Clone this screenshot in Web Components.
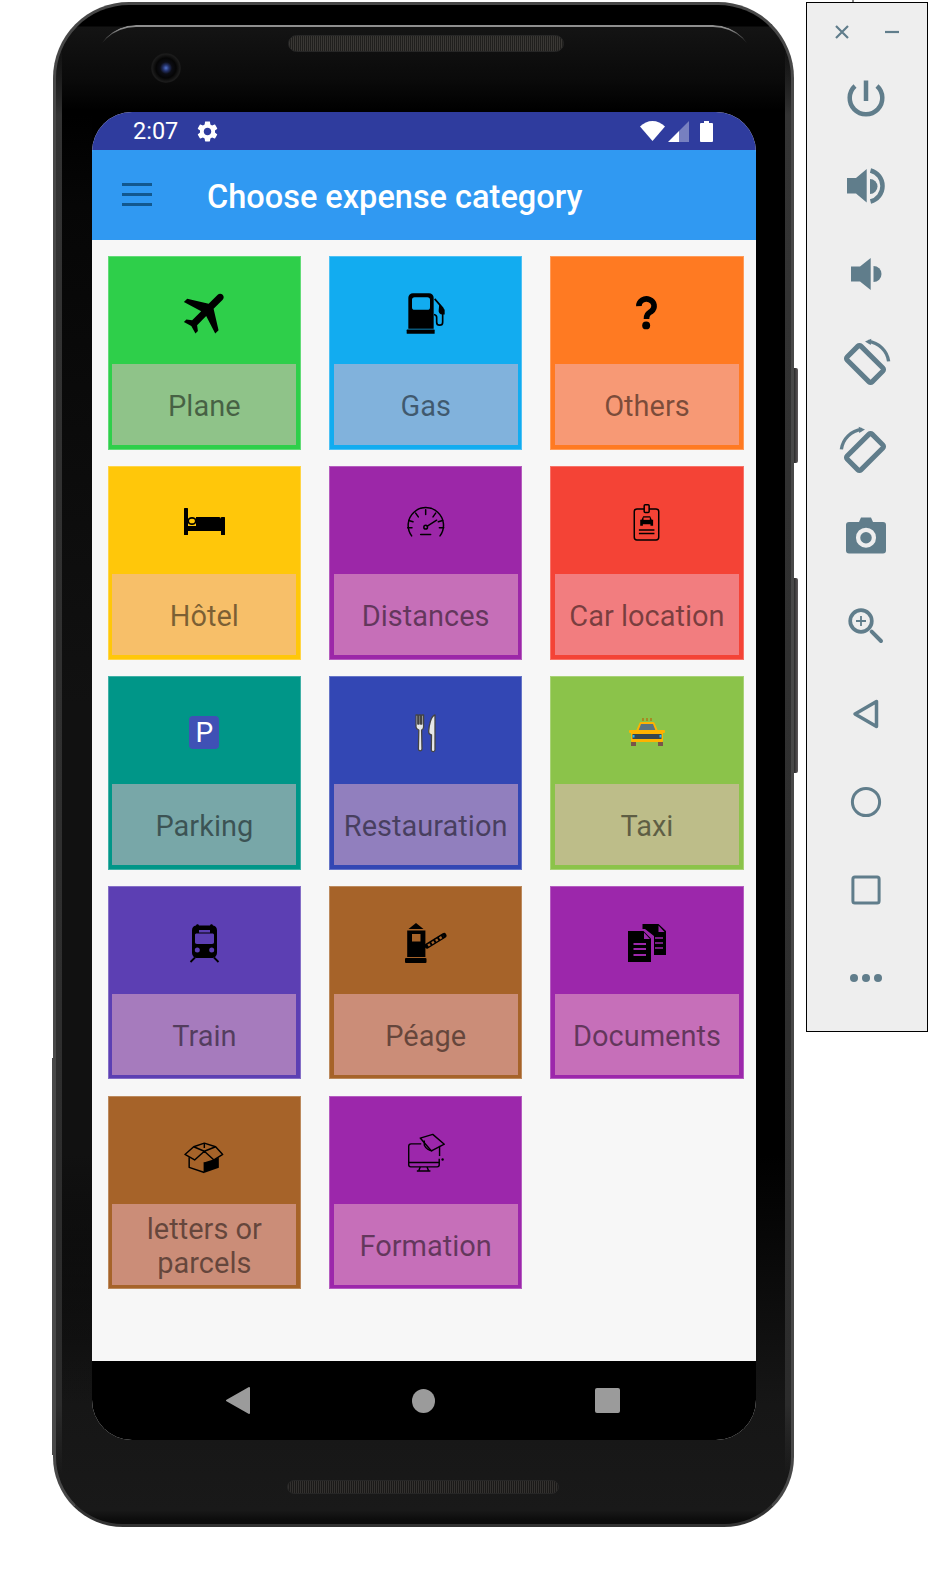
<!DOCTYPE html>
<html>
<head>
<meta charset="utf-8">
<title>Choose expense category</title>
<style>
  html, body { margin: 0; padding: 0; background: #fff; }
  body { width: 928px; height: 1590px; overflow: hidden; font-family: Roboto, "Liberation Sans", sans-serif; }
  .page { display: flex; align-items: flex-start; padding: 2px 0 0 53px; gap: 12px; }
  svg { display: block; overflow: visible; }
</style>
</head>
<body>
<div class="page">
  <phone-frame>
    <status-bar time="2:07"></status-bar>
    <app-bar title="Choose expense category"></app-bar>
    <expense-grid>
      <expense-card color="#2ecf4a">
        <svg slot="icon" width="42" height="42" viewBox="3 3 18 18" style="margin:0 0 3px 5px"><path transform="rotate(45 12 12)" d="M21 16v-2l-8-5V3.500c0-.83-.67-1.500-1.500-1.500S10 2.670 10 3.500V9l-8 5v2l8-2.500V19l-2 1.500V22l3.500-1 3.500 1v-1.500L13 19v-5.500l8 2.500z"/></svg>
        Plane
      </expense-card>
      <expense-card color="#12acf0">
        <svg slot="icon" width="40" height="43" viewBox="20 95 120 128" style="margin:1px 0 0 1px">
          <path fill-rule="evenodd" d="M27 205V112a14 14 0 0 1 14-14h48a14 14 0 0 1 14 14v93zM38 118v22a8 8 0 0 0 8 8h38a8 8 0 0 0 8-8v-22a8 8 0 0 0-8-8H46a8 8 0 0 0-8 8z"/>
          <rect x="22" y="207" width="84" height="13" rx="2"/>
          <path fill="none" stroke="#000" stroke-width="5" d="M106 115l24 28v42a9 9 0 0 1-18 0v-14a9 9 0 0 0-8-9"/>
          <path d="M120 130l16 18v14h-7a11 11 0 0 1-11-13z"/>
        </svg>
        Gas
      </expense-card>
      <expense-card color="#ff7a22">
        <svg slot="icon" width="27" height="38" viewBox="700 100 80 115" style="margin-right:1px">
          <path fill="none" stroke="#000" stroke-width="17" d="M717 137a23 21 0 1 1 38 15c-9 7-15 9-15 24"/>
          <circle cx="739" cy="195" r="12"/>
        </svg>
        Others
      </expense-card>

      <expense-card color="#ffc70a">
        <svg slot="icon" width="41" height="27" viewBox="0 0 41 27" style="margin-bottom:2px">
          <rect x="0" y="0" width="4" height="27" rx=".5"/>
          <rect x="37" y="9" width="4" height="18" rx=".5"/>
          <rect x="0" y="18" width="41" height="5"/>
          <path d="M12 9h23a2 2 0 0 1 2 2v8H12z"/>
          <ellipse cx="8" cy="13" rx="3.800" ry="3.200" fill="none" stroke="#000" stroke-width="1.800"/>
        </svg>
        Hôtel
      </expense-card>
      <expense-card color="#9c27a8">
        <svg slot="icon" width="40" height="32" viewBox="18 740 120 95">
          <g fill="none" stroke="#000" stroke-width="4.500" stroke-linecap="round">
            <path d="M35 826a53 53 0 1 1 85 0"/>
            <path d="M77 748v14M47 758l8 11M107 758l-8 11M26 780l13 4M128 780l-13 4M23 802h13M131 802h-13"/>
            <circle cx="77" cy="800" r="5.500"/>
            <path d="M82 797l28-18M62 822h30"/>
          </g>
        </svg>
        Distances
      </expense-card>
      <expense-card color="#f44336">
        <svg slot="icon" width="29" height="39" viewBox="700 730 86 118">
          <g fill="none" stroke="#000" stroke-width="4.500">
            <path d="M736 748h-22a8 8 0 0 0-8 8v78a8 8 0 0 0 8 8h58a8 8 0 0 0 8-8v-78a8 8 0 0 0-8-8h-21"/>
            <rect x="736" y="735" width="15" height="24" rx="3"/>
            <path d="M720 812h47M720 822h47"/>
          </g>
          <path d="M733 770h21l5 11h4v18h-8v-5h-23v5h-8v-18h4z"/>
          <rect x="734" y="774" width="19" height="7" fill="#f44336"/>
        </svg>
        Car location
      </expense-card>

      <expense-card color="#009688">
        <parking-sign slot="icon">P</parking-sign>
        Parking
      </expense-card>
      <expense-card color="#3347b4">
        <svg slot="icon" width="22" height="38" viewBox="0 0 22 38" style="margin-left:1px">
          <g fill="#e6e8e8" stroke="#444" stroke-width="1.300" stroke-linejoin="round">
            <path d="M1 1h1.800v9H4V1h1.600v9h1.200V1H8.600v12c0 1.500-.8 2.500-2 3l.4 19a1.800 1.800 0 0 1-3.600 0l.4-19c-1.200-.5-2.800-1.500-2.800-3z"/>
            <path d="M20 1v35a1.900 1.900 0 0 1-3.700.3L16.500 21c-2-.5-3-2-2.800-4 .3-5 2-15 6.300-16z"/>
          </g>
        </svg>
        Restauration
      </expense-card>
      <expense-card color="#8bc34a">
        <svg slot="icon" width="36" height="29" viewBox="0 0 36 29">
          <path d="M13 0h2v3h-2zM17 0h2v3h-2zM21 0h2v3h-2z" fill="#a88a22"/>
          <path d="M7 13l3.500-8c.3-.7.8-1 1.500-1h12c.7 0 1.200.3 1.500 1L29 13z" fill="#ffb300"/>
          <path d="M9.500 12.500l2.500-6.500h12l2.500 6.500z" fill="#5a7480"/>
          <rect x="0" y="12" width="36" height="3" rx="1" fill="#ffb300"/>
          <rect x="2" y="13" width="32" height="11" rx="1" fill="#ffb300"/>
          <rect x="3.500" y="16" width="29" height="5" fill="#37474f"/>
          <rect x="3.500" y="17" width="2" height="2.500" fill="#29b6f6"/>
          <rect x="30.500" y="17" width="2" height="2.500" fill="#29b6f6"/>
          <rect x="2" y="24" width="5" height="4" fill="#795548"/>
          <rect x="29" y="24" width="5" height="4" fill="#795548"/>
        </svg>
        Taxi
      </expense-card>

      <expense-card color="#5c3fb3">
        <svg slot="icon" width="29" height="40" viewBox="0 0 29 40">
          <path fill-rule="evenodd" d="M6 2.500C6.500.8 8.500.8 9 2.500h11c.5-1.700 2.500-1.700 3 0 2.500.5 4 2 4 5v22c0 3-2 5.500-5 5.500H7c-3 0-5-2.500-5-5.500v-22c0-3 1.500-4.500 4-5zM9 7v2.500h11V7zM5 12v7c0 1 .5 2 2 2h15c1.500 0 2-1 2-2v-7c0-1-.5-1.500-2-1.500H7c-1.500 0-2 .5-2 1.500zM7.300 24.500a2.500 2.500 0 1 0 0 5 2.500 2.500 0 0 0 0-5zM21.700 24.500a2.500 2.500 0 1 0 0 5 2.500 2.500 0 0 0 0-5z"/>
          <path d="M5 34.500L.5 39M24 34.500l4.500 4.500" stroke="#000" stroke-width="1.800" fill="none"/>
        </svg>
        Train
      </expense-card>
      <expense-card color="#a66329">
        <svg slot="icon" width="41" height="40" viewBox="0 0 41 40">
          <path d="M11 0l7.500 6H3.500z"/>
          <path fill-rule="evenodd" d="M2.200 7.500h18.200V34H2.200zM7 11v7.500h8.500V11z"/>
          <rect x="0" y="35" width="21.500" height="5" rx="1"/>
          <path d="M22 23L39 12.500" stroke="#000" stroke-width="5" stroke-linecap="round"/>
          <path d="M23 22.500L38.500 13" stroke="#a66329" stroke-width="2.400" stroke-dasharray="2.500 2"/>
        </svg>
        Péage
      </expense-card>
      <expense-card color="#9c27ab">
        <svg slot="icon" width="38" height="38" viewBox="0 0 38 38">
          <path d="M14.500 0h16L38 7v24H26V12L17 5h-2.500z"/>
          <path d="M30.500 1.500V8h6z" fill="#9c27ab"/>
          <path d="M27 14h8M27 19h8M27 24h8" stroke="#9c27ab" stroke-width="1.600"/>
          <path d="M0 7h15.500L23 14.500V38H0z"/>
          <path d="M16 8.500V15h6z" fill="#9c27ab"/>
          <path d="M5.500 20H18M5.500 25H18M5.500 31H18" stroke="#9c27ab" stroke-width="1.800"/>
        </svg>
        Documents
      </expense-card>

      <expense-card color="#a66329">
        <svg slot="icon" width="40" height="32" viewBox="252 150 124 98" style="margin-top:10px">
          <path d="M316 212l44-14v31l-44 16z"/>
          <g fill="none" stroke="#000" stroke-width="4.500" stroke-linejoin="round">
            <path d="M268 197v31l47 16"/>
            <path d="M315 212v32"/>
            <path d="M315 178l-33-14 33-11 35 11zM282 164l-27 24 30 17 30-27 30 27 27-17-22-24"/>
            <path d="M315 155v13"/>
          </g>
        </svg>
        letters or parcels
      </expense-card>
      <expense-card color="#9c27ab">
        <svg slot="icon" width="40" height="40" viewBox="920 128 118 118">
          <g fill="none" stroke="#000" stroke-width="4.200" stroke-linejoin="round">
            <path d="M965 160h-30a7 7 0 0 0-7 7v55a6 6 0 0 0 6 6h78a6 6 0 0 0 6-6v-18"/>
            <path d="M928 215h90M962 228l-4 10M982 228l4 10M952 240h40"/>
            <path d="M962 143l37-11 34 29-38 20z"/>
            <path d="M974 150v14c6 12 16 16 24 16"/>
            <path d="M1019 166v30"/>
          </g>
          <circle cx="1028" cy="206" r="3.500"/>
        </svg>
        Formation
      </expense-card>
    </expense-grid>
    <nav-bar></nav-bar>
  </phone-frame>
  <emulator-toolbar></emulator-toolbar>
</div>

<script>
class PhoneFrame extends HTMLElement {
  constructor() {
    super();
    this.attachShadow({ mode: "open" });
    this.shadowRoot.innerHTML = `
      <style>
        :host { display: block; position: relative; flex: none; width: 741px; height: 1525px; }
        .shell {
          box-sizing: border-box;
          width: 100%;
          height: 100%;
          border: 3px solid #484848;
          border-bottom-color: #333;
          border-radius: 76px 76px 70px 70px;
          overflow: hidden;
          display: flex;
          flex-direction: column;
          background:
            linear-gradient(to bottom, transparent 40px, #333 110px, #2c2c2c 1400px, transparent 1470px) left 0 top 0 / 6px 100% no-repeat,
            linear-gradient(to bottom, transparent 40px, #333 110px, #2c2c2c 1400px, transparent 1470px) right 0 top 0 / 6px 100% no-repeat,
            linear-gradient(to bottom, transparent 110px, #060606 200px, #111 700px, #111 1150px, transparent 1400px) left 6px top 0 / 30px 100% no-repeat,
            linear-gradient(to bottom, #000 0, #000 21px, #141414 22px, #0a0a0a 75px, #000 105px, #000 1150px, #161616 1400px, #191919 1505px, #0c0c0c 1515px);
          position: relative;
        }
        .top { flex: none; height: 107px; display: flex; padding: 30px 0 0 232px; box-sizing: border-box; }
        .bottom { flex: 1; display: flex; padding: 40px 0 0 231px; box-sizing: border-box; }
        .speaker {
          width: 274px;
          height: 15px;
          border: 1px solid #262626;
          border-radius: 9px;
          background: repeating-linear-gradient(90deg, #3a3835 0 1px, #201f1d 1px 2px);
        }
        .bottom .speaker { width: 270px; height: 12px; background: repeating-linear-gradient(90deg, #33312f 0 1px, #1a1918 1px 2px); }
        .screen {
          flex: none;
          width: 664px;
          height: 1328px;
          margin-left: 36px;
          border-radius: 40px;
          overflow: hidden;
          background: #f7f7f7;
          display: flex;
          flex-direction: column;
        }
        .highlight {
          position: absolute;
          left: 38px;
          right: 36px;
          top: 20px;
          height: 40px;
          border-top: 2px solid #8e8e8e;
          border-radius: 55px 55px 0 0;
          -webkit-mask: linear-gradient(to bottom, #000 4px, transparent 18px);
        }
        .camera {
          position: absolute;
          left: 95px;
          top: 48px;
          width: 30px;
          height: 30px;
          border-radius: 50%;
          background: radial-gradient(circle at 50% 50%, #5272cc 0, #24326a 3px, #0c0d14 6px, #050505 10px, #1c1c1c 14px, #141414 15px);
        }
        .btn { position: absolute; right: -4px; width: 4px; background: linear-gradient(to right, #2a2a2a, #5f5a5c); border-radius: 0 2px 2px 0; }
        .lip { position: absolute; left: -1px; top: 1056px; bottom: 72px; width: 2px; background: #4a4a4a; }
      </style>
      <div class="shell">
        <div class="top"><div class="speaker"></div></div>
        <div class="screen"><slot></slot></div>
        <div class="bottom"><div class="speaker"></div></div>
        <div class="highlight"></div>
        <div class="camera"></div>
      </div>
      <div class="btn" style="top:366px;height:95px"></div>
      <div class="btn" style="top:576px;height:195px"></div>
      <div class="lip"></div>
    `;
  }
}

class StatusBar extends HTMLElement {
  constructor() {
    super();
    this.attachShadow({ mode: "open" });
    this.shadowRoot.innerHTML = `
      <style>
        :host { display: flex; flex: none; align-items: center; height: 38px; padding: 0 43px 0 41px; background: #2f3c9e; color: #fff; font: 400 23.5px/38px Roboto, sans-serif; }
        svg { display: block; flex: none; }
        .time { margin-right: 17px; }
        .right { margin-left: auto; display: flex; align-items: center; }
      </style>
      <span class="time"></span>
      <svg width="25" height="25" viewBox="0 0 24 24" fill="#fff"><path d="M19.140 12.940c.04-.3.06-.61.06-.94 0-.32-.02-.64-.07-.94l2.030-1.580c.18-.14.230-.41.120-.61l-1.920-3.320c-.12-.22-.37-.29-.59-.22l-2.390.96c-.5-.38-1.030-.7-1.620-.94l-.36-2.540c-.04-.24-.24-.41-.48-.41h-3.840c-.24 0-.43.17-.47.41l-.36 2.540c-.59.24-1.130.57-1.620.94l-2.390-.96c-.22-.08-.47 0-.59.22L2.740 8.870c-.12.210-.08.470.120.610l2.030 1.580c-.05.3-.09.630-.09.940s.02.640.07.940l-2.030 1.580c-.18.140-.23.410-.12.610l1.920 3.320c.12.220.37.290.59.220l2.390-.96c.5.380 1.030.700 1.620.940l.36 2.540c.05.240.24.410.48.410h3.840c.24 0 .44-.17.47-.41l.36-2.540c.59-.24 1.130-.56 1.620-.94l2.390.96c.22.080.47 0 .59-.22l1.920-3.320c.12-.22.070-.47-.12-.61l-2.010-1.580zM12 15.600c-1.980 0-3.600-1.620-3.600-3.600s1.620-3.600 3.600-3.600 3.600 1.620 3.600 3.600-1.620 3.600-3.600 3.600z"/></svg>
      <div class="right">
        <svg width="25" height="20" viewBox="0 0 25 20" fill="#fff"><path d="M12.500 20L0 5.500C3.500 2 8 0 12.500 0S21.500 2 25 5.500z"/></svg>
        <svg width="21" height="21" viewBox="0 0 21 21" style="margin-left:3px"><path d="M0 21L11 10v11z" fill="#fff"/><path d="M11 10L21 0v21H11z" fill="#fff" fill-opacity=".35"/></svg>
        <svg width="13" height="21" viewBox="0 0 13 21" fill="#fff" style="margin-left:11px"><path d="M4 0h5v2h3a1 1 0 0 1 1 1v17a1 1 0 0 1-1 1H1a1 1 0 0 1-1-1V3a1 1 0 0 1 1-1h3z"/></svg>
      </div>
    `;
    this.shadowRoot.querySelector(".time").textContent = this.getAttribute("time");
  }
}

class AppBar extends HTMLElement {
  constructor() {
    super();
    this.attachShadow({ mode: "open" });
    this.shadowRoot.innerHTML = `
      <style>
        :host { display: flex; flex: none; align-items: center; gap: 55px; height: 90px; padding-left: 30px; background: #3099f2; }
        .menu { display: flex; flex-direction: column; gap: 7px; width: 30px; margin-top: -2px; }
        .menu i { display: block; height: 3px; background: #12588f; }
        h1 { margin: 4px 0 0; color: #fff; font: 500 32.5px/40px Roboto, sans-serif; }
      </style>
      <div class="menu"><i></i><i></i><i></i></div>
      <h1></h1>
    `;
    this.shadowRoot.querySelector("h1").textContent = this.getAttribute("title");
  }
}

class ExpenseGrid extends HTMLElement {
  constructor() {
    super();
    this.attachShadow({ mode: "open" });
    this.shadowRoot.innerHTML = `
      <style>
        :host {
          display: grid;
          flex: 1;
          grid-template-columns: repeat(3, 193.5px);
          grid-auto-rows: 193.8px;
          column-gap: 27.8px;
          row-gap: 16.1px;
          padding: 16px 0 0 15.6px;
          background: #f7f7f7;
        }
      </style>
      <slot></slot>
    `;
  }
}

class ExpenseCard extends HTMLElement {
  constructor() {
    super();
    this.attachShadow({ mode: "open" });
    this.shadowRoot.innerHTML = `
      <style>
        :host { display: flex; flex-direction: column; box-sizing: border-box; padding: 0 4.7px 4.7px; outline: 1px solid rgba(255,255,255,.25); outline-offset: -1px; }
        .icon { flex: 1; display: flex; align-items: center; justify-content: center; padding-top: 6px; }
        .label {
          flex: none;
          height: 81px;
          box-sizing: border-box;
          display: flex;
          align-items: center;
          justify-content: center;
          text-align: center;
          padding: 5px 2px 0;
          background: rgba(240,184,200,.5);
          color: rgba(0,0,0,.5);
          font: 400 29px/33.5px Roboto, sans-serif;
        }
      </style>
      <div class="icon"><slot name="icon"></slot></div>
      <div class="label"><div><slot></slot></div></div>
    `;
    this.style.background = this.getAttribute("color");
  }
}

class ParkingSign extends HTMLElement {
  constructor() {
    super();
    this.attachShadow({ mode: "open" });
    this.shadowRoot.innerHTML = `
      <style>
        :host { display: flex; align-items: center; justify-content: center; width: 30px; height: 33px; border-radius: 4px; background: #3f51b5; color: #fff; font: 400 28px/33px Roboto, sans-serif; }
      </style>
      <slot></slot>
    `;
  }
}

class NavBar extends HTMLElement {
  constructor() {
    super();
    this.attachShadow({ mode: "open" });
    this.shadowRoot.innerHTML = `
      <style>
        :host { display: flex; flex: none; align-items: center; height: 79px; background: #000; padding: 0 0 0 134px; }
        svg { display: block; flex: none; }
      </style>
      <svg width="24" height="27" viewBox="0 0 24 27" fill="#9b9b9b" stroke="#9b9b9b" stroke-width="2" stroke-linejoin="round"><path d="M1 13.500L23 1v25z"/></svg>
      <svg width="23" height="24" viewBox="0 0 23 24" fill="#9b9b9b" style="margin-left:162px"><ellipse cx="11.500" cy="12" rx="11.500" ry="12"/></svg>
      <svg width="25" height="25" viewBox="0 0 25 25" fill="#9b9b9b" style="margin-left:160px"><rect width="25" height="25" rx="2"/></svg>
    `;
  }
}

class EmulatorToolbar extends HTMLElement {
  constructor() {
    super();
    this.attachShadow({ mode: "open" });
    const back = '<path d="M13 24L34.500 11.500v25z" fill="none" stroke="#607d8b" stroke-width="3.500" stroke-linejoin="round"/>';
    const rotate = `<rect x="7.200" y="14.700" width="33.600" height="18.600" rx="2" transform="rotate(45 24 24)" fill="none" stroke="#607d8b" stroke-width="4.800"/>
      <path d="M27 2.500A22 22 0 0 1 46.500 21.500" fill="none" stroke="#607d8b" stroke-width="3.200"/><path d="M24 2.500l6-2.500-.5 6z" fill="#607d8b"/>`;
    const icons = [
      '<path transform="translate(0 1)" d="M13 11a16.300 16.300 0 1 0 22 0M24 5.500V26" fill="none" stroke="#607d8b" stroke-width="4.500"/>',
      '<path d="M5 16h9L24.700 7v33.500L14 31.500H5z" fill="#607d8b"/><path d="M28 17a7.500 7.500 0 0 1 0 15z" fill="#607d8b"/><path d="M28.500 8.500a16 16 0 0 1 0 31" fill="none" stroke="#607d8b" stroke-width="4.500"/>',
      '<path d="M9 16.500h9L28.700 8v32L18 31.500H9z" fill="#607d8b"/><path d="M31.500 16a8 8 0 0 1 0 16z" fill="#607d8b"/>',
      `<g transform="translate(-1 2) translate(24 24) scale(1.050) translate(-24 -24)">${rotate}</g>`,
      `<g transform="translate(-1 2) translate(24 24) scale(-1.050 1.050) translate(-24 -24)">${rotate}</g>`,
      '<path d="M17 8l2-4.500h10L31 8h10a3 3 0 0 1 3 3v25.500a3 3 0 0 1-3 3H7a3 3 0 0 1-3-3V11a3 3 0 0 1 3-3z" fill="#607d8b"/><circle cx="24" cy="23.700" r="7.900" fill="none" stroke="#eee" stroke-width="4.300"/>',
      '<circle cx="19" cy="19" r="10.800" fill="none" stroke="#607d8b" stroke-width="3.700"/><path d="M29.700 29.700L39 39" stroke="#607d8b" stroke-width="4" stroke-linecap="round"/><path d="M19 14v10M14 19h10" stroke="#607d8b" stroke-width="1.800"/>',
      back,
      '<circle cx="24" cy="24" r="13.600" fill="none" stroke="#607d8b" stroke-width="3"/>',
      '<rect x="10.900" y="10.900" width="26.200" height="26.200" rx="2" fill="none" stroke="#607d8b" stroke-width="3"/>',
      '<circle cx="12" cy="24" r="4" fill="#607d8b"/><circle cx="24" cy="24" r="4" fill="#607d8b"/><circle cx="36" cy="24" r="4" fill="#607d8b"/>',
    ];
    this.shadowRoot.innerHTML = `
      <style>
        :host { display: block; position: relative; flex: none; width: 122px; height: 1030px; box-sizing: border-box; border: 1px solid #000; background: #eee; }
        :host::before { content: ""; position: absolute; left: 45px; top: -3px; width: 2px; height: 2px; background: #888; }
        .head { display: flex; justify-content: center; gap: 36px; padding: 22px 1px 15px 0; }
        .cell { display: flex; align-items: center; justify-content: center; height: 88px; padding-right: 2px; }
        svg { display: block; overflow: visible; }
      </style>
      <div class="head">
        <svg width="14" height="14" viewBox="0 0 14 14"><path d="M1 1l12 12M13 1L1 13" stroke="#607d8b" stroke-width="2.200"/></svg>
        <svg width="14" height="14" viewBox="0 0 14 14"><path d="M0 7h14" stroke="#607d8b" stroke-width="2.200"/></svg>
      </div>
      ${icons.map((icon) => `<div class="cell"><svg width="48" height="48" viewBox="0 0 48 48">${icon}</svg></div>`).join("")}
    `;
  }
}

customElements.define("phone-frame", PhoneFrame);
customElements.define("status-bar", StatusBar);
customElements.define("app-bar", AppBar);
customElements.define("expense-grid", ExpenseGrid);
customElements.define("expense-card", ExpenseCard);
customElements.define("parking-sign", ParkingSign);
customElements.define("nav-bar", NavBar);
customElements.define("emulator-toolbar", EmulatorToolbar);
</script>
</body>
</html>
